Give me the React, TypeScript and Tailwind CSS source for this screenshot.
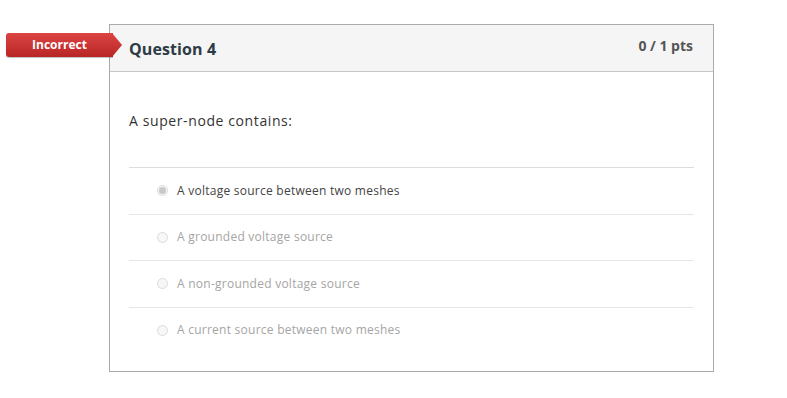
const ANSWERS = [
  { text: 'A voltage source between two meshes', selected: true },
  { text: 'A grounded voltage source', selected: false },
  { text: 'A non-grounded voltage source', selected: false },
  { text: 'A current source between two meshes', selected: false },
]

function Radio({ selected }: { selected: boolean }) {
  return (
    <span className="w-[11px] h-[11px] rounded-full border border-[#dcdcdc] bg-[#f7f7f7] flex items-center justify-center shrink-0">
      {selected && <span className="w-[7px] h-[7px] rounded-full bg-[#c9c9c9]" />}
    </span>
  )
}

export default function App() {
  return (
    <div className="w-[787px] h-[398px] bg-white relative font-['Open_Sans','Lato',sans-serif] pt-[24px]">
      {/* badge */}
      <div className="absolute left-[6px] top-[33px] flex items-center">
        <div className="w-[107px] h-[24px] rounded-l-[3px] bg-gradient-to-b from-[#dd4444] to-[#b72525] flex items-center justify-center shadow-[0_1px_1px_rgba(0,0,0,0.25)]">
          <span className="text-white text-[12px] font-bold leading-none">Incorrect</span>
        </div>
        <svg width="10" height="24" viewBox="0 0 10 24" className="-ml-px">
          <defs>
            <linearGradient id="g" x1="0" y1="0" x2="0" y2="1">
              <stop offset="0" stopColor="#dd4444" />
              <stop offset="1" stopColor="#b72525" />
            </linearGradient>
          </defs>
          <path d="M0 0 L10 12 L0 24 Z" fill="url(#g)" />
        </svg>
      </div>

      <div className="ml-[109px] w-[605px] h-[348px] border border-[#aaaaaa]">
        <div className="h-[47px] bg-[#f5f5f5] border-b border-[#c7c7c7] flex items-center justify-between pl-[19px] pr-[20px]">
          <h2 className="text-[16px] font-bold text-[#2d3b45] mt-[1px] tracking-[0.1px]">Question 4</h2>
          <span className="text-[14px] font-bold text-[#555555] -mt-[5px]">0 / 1 pts</span>
        </div>
        <div className="px-[19px]">
          <p className="text-[14px] text-[#333333] pt-[39px] pb-[36px] leading-[20px] tracking-[0.6px]">A super-node contains:</p>
          <div>
            {ANSWERS.map((a) => (
              <div key={a.text} className="h-[46.5px] border-t border-[#e6e6e6] first:border-[#dddddd] flex items-center gap-[9px] pl-[28px]">
                <Radio selected={a.selected} />
                <span className={'text-[12px] tracking-[0.25px] ' + (a.selected ? 'text-[#444444]' : 'text-[#a5a5a5]')}>{a.text}</span>
              </div>
            ))}
          </div>
        </div>
      </div>
    </div>
  )
}
